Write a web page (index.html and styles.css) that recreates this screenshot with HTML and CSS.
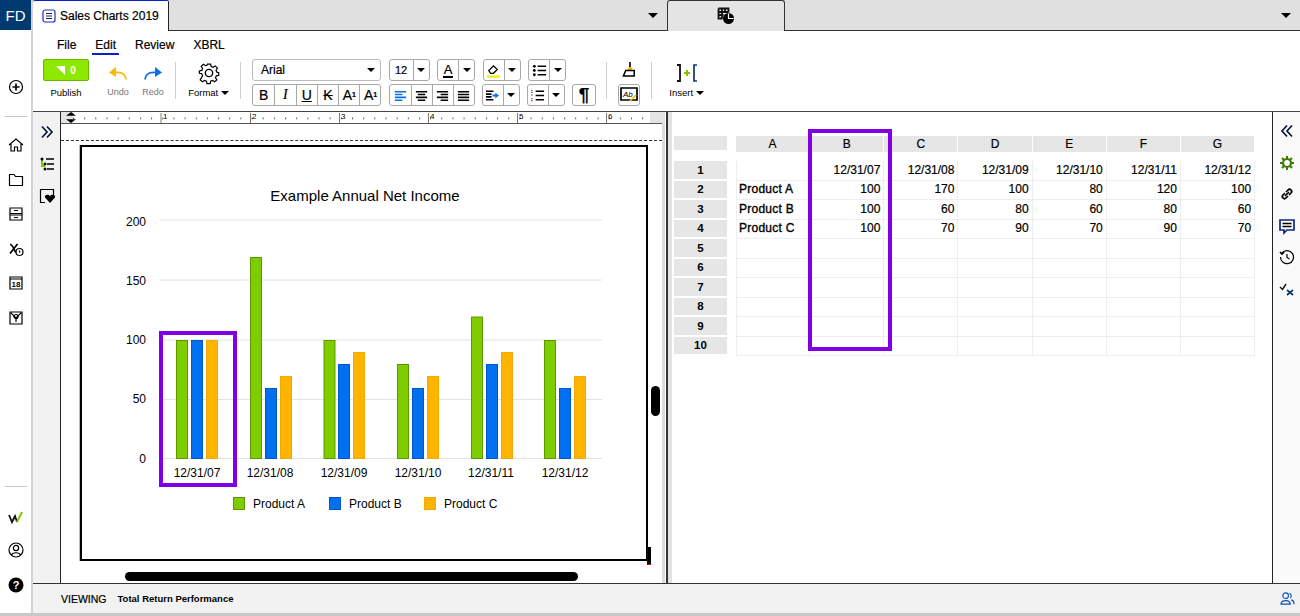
FILE: index.html
```html
<!DOCTYPE html>
<html lang="en">
<head>
<meta charset="utf-8">
<title>Sales Charts 2019</title>
<link rel="stylesheet" href="styles.css">
</head>
<body>
<div class="app">
  <aside class="rail">
    <div class="logo">FD</div>
    <div class="rail-top">
      <svg class="ic add" viewBox="0 0 16 16"><circle cx="8" cy="8" r="6.500"/><path class="thick" d="M4.500 8h7M8 4.500v7"/></svg>
      <div class="rule"></div>
      <div class="rail-icons">
        <svg class="ic" viewBox="0 0 16 16"><path d="M1 8l7-6 7 6M3 7v7h3.500v-4h3v4H13V7"/></svg>
        <svg class="ic" viewBox="0 0 16 16"><path d="M1.500 13.500v-11h4.500l1.500 2h7v9z"/></svg>
        <svg class="ic" viewBox="0 0 16 16"><path d="M2 2h12v12H2zM2 7.500h12M2 9h12M6 4.500h4M6 11.500h4"/></svg>
        <svg class="ic" viewBox="0 0 16 16"><path class="thick" d="M2 12.500L9.500 3M2 3.500c3 0 4 6 6 8"/><circle cx="11.500" cy="11" r="3.500"/><path d="M11.500 9.500V11h1"/></svg>
        <svg class="ic" viewBox="0 0 16 16"><path d="M2 2h12v12H2zM2 4h12"/><text class="cal" x="8" y="12">18</text></svg>
        <svg class="ic" viewBox="0 0 16 16"><path d="M2 2h12v12H2zM3 3l5 5 5-5M8 8v4"/><circle cx="8" cy="6.500" r="2"/></svg>
      </div>
    </div>
    <div class="rail-bottom">
      <div class="rule"></div>
      <svg class="ic w" viewBox="0 0 16 16"><path class="dark" d="M1 6l3 7 3-6 2 6"/><path class="lime" d="M9 13l5-10"/></svg>
      <svg class="ic user" viewBox="0 0 16 16"><circle cx="8" cy="8" r="7"/><circle cx="8" cy="6" r="2.600"/><path d="M3.500 13c1-3 8-3 9 0"/></svg>
      <svg class="ic" viewBox="0 0 16 16"><circle class="solid" cx="8" cy="8" r="7.500"/><text class="help" x="8" y="12">?</text></svg>
    </div>
  </aside>

  <div class="main">
    <header class="tabbar">
      <div class="tab active">
        <svg class="doc-ic" viewBox="0 0 14 14"><rect x="1" y="1" width="12" height="12" rx="2"/><path class="doc-lines" d="M4 4.500h6M4 7h6M4 9.500h6"/></svg>
        <span>Sales Charts 2019</span>
      </div>
      <div class="tab-fill fixed"><i class="caret"></i></div>
      <div class="tab second">
        <svg class="tab-ic" viewBox="0 0 18 18"><path class="dark" d="M1.500 1.500h10v4M1.500 1.500v10h4M1.500 5h10M1.500 8h5M5 1.500v10M8 1.500V5"/><circle class="solid" cx="11.500" cy="11.500" r="5.500"/><path class="white" d="M11.500 6.500v5h5"/></svg>
      </div>
      <div class="tab-fill"><i class="caret"></i></div>
    </header>

    <section class="toolbar">
      <nav class="menu">
        <span>File</span><span class="on">Edit</span><span>Review</span><span>XBRL</span>
      </nav>
      <div class="ribbon">
        <div class="col publish">
          <div class="pub-btn"><i class="flag"></i><b>0</b></div>
          <span class="lbl">Publish</span>
        </div>
        <div class="col undo">
          <svg class="big-ic" viewBox="0 0 20 16"><path class="gold" d="M8 1L1 6.500 8 11z"/><path class="gold-line" d="M6 6.500c6-.5 11 0 12 7"/></svg>
          <span class="lbl grey">Undo</span>
        </div>
        <div class="col redo">
          <svg class="big-ic" viewBox="0 0 20 16"><path class="blue" d="M12 1l7 5.500-7 4.500z"/><path class="blue-line" d="M14 6.500c-6-.5-11 0-12 7"/></svg>
          <span class="lbl grey">Redo</span>
        </div>
        <div class="sep"></div>
        <div class="col format">
          <svg class="gear" viewBox="0 0 24 24"><path d="M10 2h4l.6 3 2.400 1 2.600-1.700 2.800 2.800L20.700 9.700l1 2.300 2.300.6v3.400l-3 .6-1 2.400 1.700 2.600-2.800 2.300-2.600-1.600-2.300 1-.6 3h-4l-.6-3-2.400-1-2.600 1.600-2.800-2.300L4 16.400 3 14l-3-.6V10.500l3-.6 1-2.400-1.700-2.600 2.800-2.600L7.700 4l2-.9z" transform="translate(1.500 .5) scale(.88)"/><circle cx="12" cy="12" r="4"/></svg>
          <span class="lbl">Format <i class="caret small"></i></span>
        </div>
        <div class="sep sep-b"></div>
        <div class="fmt">
          <div class="fmt-row">
            <div class="select"><span>Arial</span><i class="caret small"></i></div>
            <div class="bg size"><span class="b wide">12</span><span class="b arrow"><i class="caret small"></i></span></div>
            <div class="bg color"><span class="b wide"><span class="under-a">A</span></span><span class="b arrow"><i class="caret small"></i></span></div>
            <div class="bg color">
              <span class="b wide"><svg class="tb" viewBox="0 0 16 16"><path class="hl-shape" d="M3 8l5-5 4 4-4 4H5z"/><path class="hl" d="M1 14.500h14"/></svg></span>
              <span class="b arrow"><i class="caret small"></i></span>
            </div>
            <div class="bg color">
              <span class="b wide"><svg class="tb" viewBox="0 0 16 16"><path class="thick" d="M6 3.500h9M6 8h9M6 12.500h9"/><circle class="solid" cx="2.500" cy="3.500" r="1.500"/><circle class="solid" cx="2.500" cy="8" r="1.500"/><circle class="solid" cx="2.500" cy="12.500" r="1.500"/></svg></span>
              <span class="b arrow"><i class="caret small"></i></span>
            </div>
          </div>
          <div class="fmt-row second-row">
            <div class="bg styles">
              <span class="b t">B</span><span class="b t ital">I</span><span class="b t und">U</span><span class="b t strike">K</span><span class="b t">A<sup>1</sup></span><span class="b t">A<sub>1</sub></span>
            </div>
            <div class="bg align">
              <span class="b"><svg class="tb" viewBox="0 0 16 16"><path class="blue-line" d="M2 4h12M2 7h8M2 10h12M2 13h8"/></svg></span>
              <span class="b"><svg class="tb" viewBox="0 0 16 16"><path class="thick" d="M2 4h12M4 7h8M2 10h12M4 13h8"/></svg></span>
              <span class="b"><svg class="tb" viewBox="0 0 16 16"><path class="thick" d="M2 4h12M6 7h8M2 10h12M6 13h8"/></svg></span>
              <span class="b"><svg class="tb" viewBox="0 0 16 16"><path class="thick" d="M2 4h12M2 7h12M2 10h12M2 13h12"/></svg></span>
            </div>
            <div class="bg color">
              <span class="b wide"><svg class="tb" viewBox="0 0 16 16"><path class="thick" d="M1 3.500h8M1 6.500h6M1 9.500h6M1 12.500h8"/><path class="blue" d="M11 5l4 3-4 3zM8 7h4v2H8z"/></svg></span>
              <span class="b arrow"><i class="caret small"></i></span>
            </div>
            <div class="bg color">
              <span class="b wide"><svg class="tb" viewBox="0 0 16 16"><path class="thick" d="M6 3.500h9M6 8h9M6 12.500h9"/><path class="dots" d="M2 2v3M2 7v2M2 11v3"/></svg></span>
              <span class="b arrow"><i class="caret small"></i></span>
            </div>
            <div class="bg pilcrow"><span class="b wide">¶</span></div>
          </div>
        </div>
        <div class="sep sep-tight"></div>
        <div class="col clean">
          <svg class="broom" viewBox="0 0 18 18"><path class="thick" d="M9.500 1v6"/><path class="gold" d="M7 7h5v3H7z"/><path class="broom-head" d="M5 10h9v6H2.500z"/></svg>
          <span class="b spell"><svg class="tb" viewBox="0 0 18 18"><path class="thick" d="M1 2h16v12H1z"/><text class="ab" x="3" y="11">Ab</text><path class="gold-line" d="M10 15l6-6"/></svg></span>
        </div>
        <div class="sep"></div>
        <div class="col insert">
          <svg class="ins" viewBox="0 0 24 20"><path class="dark" d="M2 2h3v16H2"/><path class="lime" d="M9 10h6M12 7v6"/><path class="teal" d="M22 2h-3v16h3"/></svg>
          <span class="lbl">Insert <i class="caret small"></i></span>
        </div>
      </div>
    </section>

    <section class="work">
      <div class="nav-col">
        <svg class="ic" viewBox="0 0 16 16"><path class="navy" d="M3 2.500l5 5.500-5 5.500M8 2.500l5 5.500-5 5.500"/></svg>
        <svg class="ic" viewBox="0 0 16 16"><path class="lime" d="M3 2v8h3"/><path class="thick" d="M7 3h8M8 8h7M8 13h7"/><circle class="solid" cx="3" cy="3" r="1.500"/><circle class="solid" cx="6" cy="8" r="1.500"/><circle class="solid" cx="6" cy="13" r="1.500"/></svg>
        <svg class="ic" viewBox="0 0 16 16"><path d="M10 1.500H1.500v13H6M1.500 1.500h13V7"/><path class="solid" d="M11 15L6 9.500c-1-2.500 3-4 5-1.500 2-2.500 6-1 5 1.500z"/></svg>
      </div>

      <div class="doc">
        <svg class="ruler" viewBox="61 112 601 12" preserveAspectRatio="none">
          <defs>
            <pattern id="ticks" x="73" y="116" width="11.16" height="8" patternUnits="userSpaceOnUse">
              <rect x="0" y="2" width="1" height="2" class="tick"/>
            </pattern>
          </defs>
          <rect x="61" y="112" width="12" height="12" class="r-end"/>
          <rect x="73" y="116" width="577" height="8" fill="url(#ticks)"/>
          <rect x="650" y="112" width="15" height="12" class="r-end"/>
          <path class="r-main" d="M71 112l5 4h-10zM71 124l5-4h-10z"/>
          <path class="r-mark" d="M161 113v11M250.500 113v11M339.500 113v11M428.500 113v11M517.500 113v11M606.500 113v11"/>
          <text class="r-num" x="163" y="120">1</text><text class="r-num" x="252" y="120">2</text><text class="r-num" x="341" y="120">3</text><text class="r-num" x="430" y="120">4</text><text class="r-num" x="519" y="120">5</text><text class="r-num" x="608" y="120">6</text>
        </svg>
        <div class="doc-body">
          <div class="dashed"></div>
          <div class="page">
            <svg class="chart" viewBox="82 147 564 412">
              <text class="title" x="365" y="201">Example Annual Net Income</text>
              <path class="grid" d="M160 220h442M160 280h442M160 340h442M160 399.500h442M160 458.500h442"/>
              <text class="axis" x="146" y="226">200</text><text class="axis" x="146" y="285">150</text><text class="axis" x="146" y="344">100</text><text class="axis" x="146" y="403">50</text><text class="axis" x="146" y="463">0</text>
              <rect class="pa" x="176.500" y="340.500" width="11" height="118"/><rect class="pb" x="191.500" y="340.500" width="11" height="118"/><rect class="pc" x="206.500" y="340.500" width="11" height="118"/>
              <rect class="pa" x="250.500" y="257.500" width="11" height="201"/><rect class="pb" x="265.500" y="388.500" width="11" height="70"/><rect class="pc" x="280.500" y="376.500" width="11" height="82"/>
              <rect class="pa" x="324" y="340.500" width="11" height="118"/><rect class="pb" x="338.500" y="364.500" width="11" height="94"/><rect class="pc" x="353.500" y="352.500" width="11" height="106"/>
              <rect class="pa" x="397.500" y="364.500" width="11" height="94"/><rect class="pb" x="412.500" y="388.500" width="11" height="70"/><rect class="pc" x="427.500" y="376.500" width="11" height="82"/>
              <rect class="pa" x="471.500" y="317" width="11" height="141.500"/><rect class="pb" x="486.500" y="364.500" width="11" height="94"/><rect class="pc" x="501.500" y="352.500" width="11" height="106"/>
              <rect class="pa" x="544.500" y="340.500" width="11" height="118"/><rect class="pb" x="559.500" y="388.500" width="11" height="70"/><rect class="pc" x="574.500" y="376.500" width="11" height="82"/>
              <text class="xl" x="197" y="477">12/31/07</text><text class="xl" x="270" y="477">12/31/08</text><text class="xl" x="344" y="477">12/31/09</text><text class="xl" x="418" y="477">12/31/10</text><text class="xl" x="491" y="477">12/31/11</text><text class="xl" x="565" y="477">12/31/12</text>
              <rect class="pa" x="233.500" y="497.500" width="11" height="12"/><text class="leg" x="253" y="508">Product A</text>
              <rect class="pb" x="329.500" y="497.500" width="11" height="12"/><text class="leg" x="349" y="508">Product B</text>
              <rect class="pc" x="424.500" y="497.500" width="11" height="12"/><text class="leg" x="444" y="508">Product C</text>
              <rect class="hl-box" x="161" y="333" width="74" height="152"/>
            </svg>
            <i class="page-handle"></i>
          </div>
          <div class="vthumb"></div>
          <div class="hthumb"></div>
        </div>
      </div>

      <div class="split"></div>

      <div class="sheet">
        <div class="sgrid">
          <div class="rh corner"></div><div class="ch">A</div><div class="ch">B</div><div class="ch">C</div><div class="ch">D</div><div class="ch">E</div><div class="ch">F</div><div class="ch">G</div>
          <div class="rh">1</div><div class="c"></div><div class="c n">12/31/07</div><div class="c n">12/31/08</div><div class="c n">12/31/09</div><div class="c n">12/31/10</div><div class="c n">12/31/11</div><div class="c n">12/31/12</div>
          <div class="rh">2</div><div class="c p">Product A</div><div class="c n">100</div><div class="c n">170</div><div class="c n">100</div><div class="c n">80</div><div class="c n">120</div><div class="c n">100</div>
          <div class="rh">3</div><div class="c p">Product B</div><div class="c n">100</div><div class="c n">60</div><div class="c n">80</div><div class="c n">60</div><div class="c n">80</div><div class="c n">60</div>
          <div class="rh">4</div><div class="c p">Product C</div><div class="c n">100</div><div class="c n">70</div><div class="c n">90</div><div class="c n">70</div><div class="c n">90</div><div class="c n">70</div>
          <div class="rh">5</div><div class="c"></div><div class="c"></div><div class="c"></div><div class="c"></div><div class="c"></div><div class="c"></div><div class="c"></div>
          <div class="rh">6</div><div class="c"></div><div class="c"></div><div class="c"></div><div class="c"></div><div class="c"></div><div class="c"></div><div class="c"></div>
          <div class="rh">7</div><div class="c"></div><div class="c"></div><div class="c"></div><div class="c"></div><div class="c"></div><div class="c"></div><div class="c"></div>
          <div class="rh">8</div><div class="c"></div><div class="c"></div><div class="c"></div><div class="c"></div><div class="c"></div><div class="c"></div><div class="c"></div>
          <div class="rh">9</div><div class="c"></div><div class="c"></div><div class="c"></div><div class="c"></div><div class="c"></div><div class="c"></div><div class="c"></div>
          <div class="rh">10</div><div class="c"></div><div class="c"></div><div class="c"></div><div class="c"></div><div class="c"></div><div class="c"></div><div class="c"></div>
        </div>
        <div class="col-mark"></div>
      </div>

      <aside class="side">
        <svg class="ic" viewBox="0 0 16 16"><path class="navy" d="M8 2.500L3 8l5 5.500M13 2.500L8 8l5 5.500"/></svg>
        <svg class="ic" viewBox="0 0 16 16"><path class="gear-s" d="M8 1v2.500M8 12.500V15M1 8h2.500M12.500 8H15M3 3l2 2M11 11l2 2M13 3l-2 2M5 11l-2 2"/><circle class="ring" cx="8" cy="8" r="4"/></svg>
        <svg class="ic" viewBox="0 0 16 16"><path class="thick" d="M7 6l2-2c2-2 5 1 3 3l-2 2M9 10l-2 2c-2 2-5-1-3-3l2-2M6 10l4-4"/></svg>
        <svg class="ic" viewBox="0 0 16 16"><path class="blue-out" d="M1 2h14v10H8l-3 3v-3H1z"/><path class="thick" d="M3.500 5.500h9M3.500 8.500h9"/></svg>
        <svg class="ic" viewBox="0 0 16 16"><path d="M3 4a6.500 6.500 0 1 1-1.500 4M8 5v3.500l2.500 1.500"/><path class="thick" d="M1 3l2 2 2-2"/></svg>
        <svg class="ic" viewBox="0 0 16 16"><path class="dark-thin" d="M1 6l2.500 2.500L7 3"/><path class="teal" d="M8 9l6 5M14 9l-6 5"/></svg>
      </aside>
    </section>

    <footer class="foot">
      <span class="view">VIEWING</span>
      <span class="name">Total Return Performance</span>
      <svg class="users" viewBox="0 0 16 16"><circle cx="6" cy="5" r="3"/><path d="M1 14c.5-5 9.500-5 10 0zM10 2.500a3 3 0 0 1 1 5M12 9.500c2 .5 3 2 3 4.500"/></svg>
    </footer>
  </div>
</div>
</body>
</html>
```
FILE: styles.css
```css
* { box-sizing: border-box; }
html, body { margin: 0; height: 100%; overflow: hidden; background: #fff; }
body { font: 12px "Liberation Sans", Arial, sans-serif; color: #000; -webkit-text-stroke: .2px #000; }
.app { display: flex; width: 1300px; height: 616px; border-bottom: 3px solid #c8c8c8; }

svg { display: block; overflow: visible; }
.ic path, .ic circle, .tb path, .big-ic path, .gear path, .gear circle, .broom path, .tab-ic path, .ins path, .doc-ic path, .doc-ic rect {
  fill: none; stroke: #000; stroke-width: 1.200;
}
.gear path, .gear circle { stroke-width: 1.500; }
.ic { width: 16px; height: 16px; flex: none; }
svg path.thick { stroke: #000; stroke-width: 1.700; fill: none; }
svg path.dark { stroke: #111; stroke-width: 1.800; fill: none; }
svg path.dark-thin { stroke: #111; stroke-width: 1.400; fill: none; }
svg path.lime { stroke: #7fc400; stroke-width: 2; fill: none; }
svg path.teal { stroke: #0a3a6c; stroke-width: 1.700; fill: none; }
svg path.navy { stroke: #0c1440; stroke-width: 1.700; fill: none; }
svg .solid, svg path.solid, svg circle.solid { fill: #000; stroke: none; }
svg path.white { stroke: #fff; stroke-width: 1.200; fill: none; }
svg path.gold { fill: #ffb900; stroke: none; }
svg path.gold-line { fill: none; stroke: #ffb900; stroke-width: 1.700; }
svg path.blue { fill: #0a6fe8; stroke: none; }
svg path.blue-line { fill: none; stroke: #0a6fe8; stroke-width: 1.700; }
svg path.blue-out { fill: none; stroke: #0a2a80; stroke-width: 1.700; }
svg path.hl { stroke: #f7f000; stroke-width: 2.600; fill: none; }
svg path.hl-shape { stroke: #000; stroke-width: 1.400; fill: #fff; }
svg path.dots { stroke: #803030; stroke-width: 1.700; stroke-dasharray: 1 1; fill: none; }
svg path.gear-s { stroke: #3f7a00; stroke-width: 2; fill: none; }
svg circle.ring { fill: #fff; stroke: #3f7a00; stroke-width: 2.200; }
svg path.broom-head { fill: #fff; stroke: #000; stroke-width: 1.600; }
svg path.doc-lines { stroke: #13216a; stroke-width: 1.200; }

/* left rail */
.rail { width: 33px; flex: none; display: flex; flex-direction: column; border-right: 2px solid #d4d4d4; }
.logo { height: 30px; flex: none; background: #003a70; color: #fff; font-size: 15px; -webkit-text-stroke: 0; display: flex; align-items: center; justify-content: center; }
.rail-top { display: flex; flex-direction: column; align-items: center; padding-top: 49px; flex: 1; }
.add { margin-bottom: 21px; }
.rule { width: 22px; height: 1px; background: #c8c8c8; flex: none; }
.rail-icons { display: flex; flex-direction: column; gap: 18.600px; padding-top: 20px; align-items: center; }
.rail-bottom { display: flex; flex-direction: column; align-items: center; gap: 17px; padding-bottom: 20px; }
.rail-bottom .rule { margin-bottom: 5px; }
.user { margin-bottom: 2px; }
.cal { font: bold 8px "Liberation Sans", sans-serif; text-anchor: middle; fill: #000; }
.help { font: bold 11px "Liberation Sans", sans-serif; text-anchor: middle; fill: #fff; -webkit-text-stroke: 0; }

/* main */
.main { flex: 1; min-width: 0; display: flex; flex-direction: column; }
.tabbar { height: 31px; flex: none; display: flex; background: #e0e0e0; border-bottom: 1px solid #333; }
.tab { height: 31px; display: flex; align-items: center; }
.tab.active { width: 136px; background: #fff; border-top: 1px solid #0a20c8; border-right: 1px solid #222; padding-left: 9px; gap: 4px; font-size: 12px; border-radius: 2px 2px 0 0; }
.doc-ic { width: 14px; height: 14px; }
.doc-ic rect { stroke: #1a2fc0; }
.tab-fill { flex: 1; display: flex; align-items: center; justify-content: flex-end; padding-right: 9px; }
.tab-fill.fixed { flex: none; width: 498px; }
.tab.second { width: 118px; flex: none; justify-content: center; border: 1px solid #333; border-bottom: 0; border-radius: 3px 3px 0 0; background: #e4e4e4; }
.tab-ic { width: 18px; height: 18px; }
.caret { display: inline-block; width: 0; height: 0; border-left: 5px solid transparent; border-right: 5px solid transparent; border-top: 5px solid #000; }
.caret.small { border-left-width: 4px; border-right-width: 4px; border-top-width: 4px; vertical-align: 1px; }

.toolbar { height: 81px; flex: none; border-bottom: 1px solid #444; }
.menu { display: flex; gap: 19px; padding: 7px 0 0 24px; height: 23px; line-height: 15px; }
.menu .on { position: relative; }
.menu .on::after { content: ""; position: absolute; left: -3px; right: -3px; top: 15px; height: 2px; background: #0a20c8; }
.ribbon { display: flex; padding: 5px 0 0 10px; align-items: flex-start; }
.col { display: flex; flex-direction: column; align-items: center; }
.lbl { font-size: 9.500px; white-space: nowrap; -webkit-text-stroke: 0; }
.lbl.grey { color: #777; font-size: 9px; }
.publish { width: 46px; margin-right: 18px; }
.pub-btn { width: 46px; height: 22px; background: #8fe800; border: 1px solid #69b800; border-radius: 2px; display: flex; align-items: center; justify-content: center; gap: 5px; color: #fff; font-size: 10px; -webkit-text-stroke: 0; margin-bottom: 6px; }
.flag { width: 0; height: 0; border-top: 9px solid #fff; border-left: 9px solid transparent; }
.undo { width: 22px; margin-right: 13px; height: 50px; }
.redo { width: 22px; height: 50px; }
.big-ic { width: 20px; height: 16px; margin: 7px 0 5px; }
.sep { width: 1px; height: 37px; background: #cfcfcf; margin: 3px 12px 0 11px; flex: none; }
.sep-b { margin-right: 11px; }
.sep-tight { margin-left: 10px; margin-right: 11px; }
.format { width: 41px; }
.gear { width: 22px; height: 22px; margin: 3px 0 3px; }
.fmt { display: flex; flex-direction: column; gap: 3px; width: 344px; }
.fmt-row { display: flex; height: 22px; gap: 7.500px; }
.select { width: 129px; height: 22px; border: 1px solid #bdbdbd; border-radius: 3px; display: flex; align-items: center; justify-content: space-between; padding: 0 5px 0 8px; font-size: 12px; }
.bg { display: flex; height: 22px; border: 1px solid #a8a8a8; border-radius: 3px; }
.b { display: flex; align-items: center; justify-content: center; width: 21px; height: 100%; border-left: 1px solid #a8a8a8; flex: none; }
.bg .b:first-child { border-left: 0; }
.b.wide { flex: 1; width: auto; }
.b.arrow { width: 16px; }
.size { width: 41px; font-size: 11px; }
.color { width: 38px; }
.styles { width: 129px; }
.styles .b { width: 21.300px; }
.align { width: 86px; }
.pilcrow { width: 24px; font-size: 19px; font-weight: bold; }
.tb { width: 15px; height: 15px; }
.under-a { font-size: 13px; border-bottom: 2px solid #000; line-height: 13px; padding: 0 1px; }
.t { font-size: 14px; }
.t sup, .t sub { font-size: 7px; font-weight: bold; line-height: 0; }
.ital { font-style: italic; font-family: "Liberation Serif", serif; }
.und { text-decoration: underline; }
.strike { text-decoration: line-through; }
.clean { width: 22px; }
.broom { width: 17px; height: 17px; margin: 2px 0 6px; }
.spell { width: 22px; height: 22px; border: 1px solid #a8a8a8; border-radius: 3px; }
.spell .tb { width: 18px; height: 18px; }
.ab { font: italic 8px "Liberation Sans", sans-serif; fill: #000; }
.insert { width: 35px; margin-left: 5px; }
.ins { width: 24px; height: 20px; margin: 4px 0 4px; }

/* workspace */
.work { flex: 1; min-height: 0; display: flex; }
.nav-col { width: 28px; flex: none; background: #f2f2f2; border-right: 1px solid #222; display: flex; flex-direction: column; align-items: center; gap: 16px; padding-top: 12px; }
.doc { width: 601px; flex: none; display: flex; flex-direction: column; position: relative; }
.ruler { width: 601px; height: 12px; flex: none; border-bottom: 1px solid #555; background: #fff; }
.r-end { fill: #e4e4e4; }
.tick { fill: #555; }
.r-main { fill: #000; }
.r-mark { stroke: #777; stroke-width: 1; fill: none; }
.r-num { font: 8px "Liberation Sans", sans-serif; fill: #000; }
.doc-body { flex: 1; padding: 16px 0 0 19px; position: relative; }
.dashed { position: absolute; left: 0; right: 0; top: 16px; border-top: 1px dashed #333; }
.page { width: 568px; height: 416px; border: 2px solid #000; margin-top: 5px; position: relative; box-shadow: -1px 0 0 #bbb; }
.page-handle { position: absolute; right: -5px; bottom: -6px; width: 4px; height: 18px; background: #000; border-bottom: 1px solid #e00; border-left: 1px solid #008; }
.chart { width: 564px; height: 412px; }
.title { font-size: 15px; text-anchor: middle; }
.grid { stroke: #e2e2e2; stroke-width: 1; fill: none; }
.axis { font-size: 12px; text-anchor: end; }
.xl { font-size: 12px; text-anchor: middle; }
.leg { font-size: 12px; }
.pa { fill: #7fcc00; stroke: #5c9900; }
.pb { fill: #0070f0; stroke: #0058cc; }
.pc { fill: #ffb400; stroke: #f5a800; }
.hl-box { fill: none; stroke: #8000e6; stroke-width: 4; }
.vthumb { position: absolute; left: 590px; top: 262px; width: 9px; height: 30px; border-radius: 5px; background: #000; }
.hthumb { position: absolute; left: 64px; top: 448px; width: 453px; height: 9px; border-radius: 5px; background: #000; }

.split { width: 11px; flex: none; background: linear-gradient(90deg, #fff 0 1px, #dcdcdc 1px 4px, #fff 4px 5px, #333 5px 7px, #e2e2e2 7px 11px); margin-left: -1px; }
.sheet { flex: 1; position: relative; padding: 24px 0 0 2px; background: #fff; border-right: 1px solid #222; }
.sgrid { display: grid; grid-template-columns: 62px repeat(7, 74.170px); grid-template-rows: 25px repeat(10, 19.500px); }
.rh { margin-right: 9px; background: #e6e6e6; border-bottom: 2px solid #fff; display: flex; align-items: center; justify-content: center; font-weight: bold; font-size: 11.500px; -webkit-text-stroke: 0; }
.rh.corner { height: 16px; }
.ch { height: 16px; background: #e6e6e6; border-right: 1px solid #fff; display: flex; align-items: center; justify-content: center; font-size: 12px; }
.c { border-right: 1px solid #eee; border-bottom: 1px solid #eee; display: flex; align-items: center; padding: 0 3px 1px 3px; }
.c:nth-child(8n+2) { border-left: 1px solid #eee; padding-left: 2px; }
.c.n { justify-content: flex-end; }
.c.p { -webkit-text-stroke: .35px #000; letter-spacing: .25px; }
.col-mark { position: absolute; left: 136px; top: 17px; width: 84px; height: 222px; border: 4px solid #8000e6; }
.side { width: 27px; flex: none; background: #fafafa; display: flex; flex-direction: column; align-items: center; gap: 15.600px; padding-top: 11px; }

.foot { height: 30px; flex: none; background: #f2f2f2; border-top: 1px solid #333; display: flex; align-items: center; padding: 0 5px 0 28px; font-size: 10.500px; position: relative; }
.view { margin-right: 11px; }
.name { font-weight: bold; font-size: 9.500px; -webkit-text-stroke: 0; }
.users { width: 15px; height: 15px; margin-left: auto; }
.users circle, .users path { fill: none; stroke: #0a4fc0; stroke-width: 1.200; }
```
